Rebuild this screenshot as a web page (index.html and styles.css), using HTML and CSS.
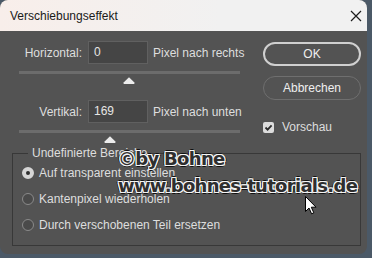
FILE: index.html
```html
<!DOCTYPE html>
<html lang="de">
<head>
	<meta charset="utf-8">
	<title>Verschiebungseffekt</title>
	<link rel="stylesheet" href="styles.css">
</head>
<body>
<div class="dialog">
	<div class="titlebar">
		<span class="title">Verschiebungseffekt</span>
		<svg class="close" width="12" height="12" viewBox="0 0 12 12"><path d="M1 1 L11 11 M11 1 L1 11" stroke="#1b1b1b" stroke-width="1.2" fill="none"/></svg>
	</div>

	<div class="content">
		<div class="main">
			<div class="row">
				<label class="lbl">Horizontal:</label>
				<div class="field">0</div>
				<span class="unit">Pixel nach rechts</span>
			</div>
			<div class="slider">
				<div class="track"></div>
				<svg class="thumb" style="margin-left:104px" width="12" height="7" viewBox="0 0 12 7"><path d="M6 0.3 L11.4 5.6 Q12 7 10.8 7 H1.2 Q0 7 0.6 5.6 Z" fill="#ececec"/></svg>
			</div>
			<div class="row">
				<label class="lbl">Vertikal:</label>
				<div class="field">169</div>
				<span class="unit">Pixel nach unten</span>
			</div>
			<div class="slider">
				<div class="track"></div>
				<svg class="thumb" style="margin-left:85px" width="12" height="7" viewBox="0 0 12 7"><path d="M6 0.3 L11.4 5.6 Q12 7 10.8 7 H1.2 Q0 7 0.6 5.6 Z" fill="#ececec"/></svg>
			</div>
		</div>
		<div class="side">
			<div class="btn primary">OK</div>
			<div class="btn">Abbrechen</div>
			<div class="check">
				<span class="box"><svg width="11" height="11" viewBox="0 0 11 11"><path d="M2.5 5.5 L4.6 7.6 L8.6 3.4" stroke="#2b2b2b" stroke-width="1.8" fill="none"/></svg></span>
				<span>Vorschau</span>
			</div>
		</div>
	</div>

	<fieldset class="group">
		<legend>Undefinierte Bereiche</legend>
		<div class="opt"><span class="radio on"></span>Auf transparent einstellen</div>
		<div class="opt"><span class="radio"></span>Kantenpixel wiederholen</div>
		<div class="opt"><span class="radio"></span>Durch verschobenen Teil ersetzen</div>
	</fieldset>

	<div class="mark">
		<div>&copy;by Bohne</div>
		<div>www.bohnes-tutorials.de</div>
	</div>
	<svg class="cursor" width="12" height="19" viewBox="0 0 12 19"><path d="M0.5 0.5 V15.5 L4 12 L6.6 17.8 L8.8 16.8 L6.3 11.2 H11 Z" fill="#fff" stroke="#000" stroke-width="1"/></svg>
</div>
</body>
</html>
```

FILE: styles.css
```css
body{margin:0;background:#4b5967;font-family:"Liberation Sans",Arial,sans-serif;font-size:12px;}
.dialog{position:relative;width:367px;height:254px;background:#535353;border-radius:8px;overflow:hidden;display:flex;flex-direction:column;color:#dedede;}
.titlebar{height:31px;flex:none;display:flex;align-items:center;justify-content:space-between;padding:0 5px 0 10px;background:linear-gradient(90deg,#f8eeea,#f1f1f1 60%);color:#1a1a1a;}
.title{font-size:12px;}
.content{display:flex;padding:10px 6px 0 19px;height:105px;}
.main{width:221px;}
.row{display:flex;align-items:center;height:23px;white-space:nowrap;}
.lbl{width:63px;flex:none;text-align:right;}
.field{width:53px;flex:none;height:21px;line-height:21px;margin-left:6px;padding-left:5px;background:#454545;border:1px solid #606060;color:#e6e6e6;}
.unit{margin-left:5px;}
.slider{height:29px;}
.track{height:3px;margin-top:7px;background:#6c6c6c;}
.thumb{display:block;margin-top:3px;}
.side{width:98px;margin-left:auto;display:flex;flex-direction:column;}
.btn{height:22px;line-height:22px;text-align:center;border:1px solid #6f6f6f;border-radius:12px;color:#efefef;margin-top:10px;font-size:12px;}
.btn.primary{height:20px;line-height:20px;border:2px solid #d0d0d0;margin-top:1px;}
.check{display:flex;align-items:center;margin-top:20px;}
.box{width:11px;height:11px;background:#dcdcdc;border-radius:2px;margin-right:8px;display:flex;}
.group{margin:0 6px 8px 12px;padding:0 0 7px 9px;border:1px solid #383838;flex:1;}
.group legend{margin-left:6px;padding:0 4px;line-height:14px;}
.opt{display:flex;align-items:center;height:26px;}
.radio{width:10px;height:10px;border:1px solid #8a8a8a;border-radius:50%;background:#4a4a4a;margin-right:5px;box-sizing:content-box;}
.radio.on{width:4px;height:4px;border:4px solid #d6d6d6;background:#2e2e2e;}
.mark{position:absolute;left:118px;top:145px;font-family:"DejaVu Sans",sans-serif;font-weight:bold;font-size:18px;line-height:27px;color:#2f2f2f;letter-spacing:-0.7px;white-space:nowrap;text-shadow:1px 0 #f4f4f4,-1px 0 #f4f4f4,0 1px #f4f4f4,0 -1px #f4f4f4,1px 1px #f4f4f4,-1px -1px #f4f4f4,1px -1px #f4f4f4,-1px 1px #f4f4f4,2px 0 #111,-2px 0 #111,0 2px #111,0 -2px #111;}
.cursor{position:absolute;left:305px;top:196px;}
```
